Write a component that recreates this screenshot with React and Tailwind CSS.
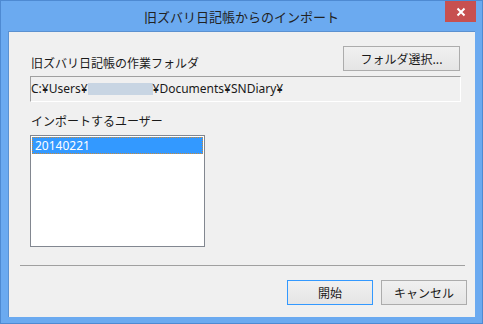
// App.jsx - 旧ズバリ日記帳からのインポート dialog
const font = { fontFamily: '"Noto Sans CJK JP", "Noto Sans", sans-serif' };
const latin = { fontFamily: '"Noto Sans", "Noto Sans CJK JP", sans-serif' };

const Button = ({ children, primary, className = "" }) => (
  <button
    className={`flex items-center justify-center h-[25px] text-[12px] text-[#1a1a1a] bg-gradient-to-b from-[#f0f0f0] to-[#e5e5e5] border ${
      primary ? "border-[#3399ff]" : "border-[#acacac]"
    } ${className}`}
  >
    {children}
  </button>
);

const App = () => {
  return (
    <div
      className="w-[483px] h-[324px] bg-[#6baaf0] border border-[#4e8ad2] flex flex-col overflow-hidden"
      style={font}
    >
      {/* title bar */}
      <div className="h-[30px] flex items-center relative shrink-0">
        <div className="flex-1 text-center text-[13px] text-[#222] leading-[30px] pt-[2px]">
          旧ズバリ日記帳からのインポート
        </div>
        <div className="absolute right-[6px] top-0 w-[31px] h-[21px] bg-[#c75050] flex items-center justify-center">
          <svg width="10" height="10" viewBox="0 0 10 10">
            <path d="M1.5 1.5 L8.5 8.5 M8.5 1.5 L1.5 8.5" stroke="#fff" strokeWidth="2" />
          </svg>
        </div>
      </div>

      {/* client area */}
      <div className="mx-[7px] w-[467px] h-[286px] bg-[#f0f0f0] border border-[#5b91d0] border-r-0 border-b-0 pl-[21px] flex flex-col">
        <div className="mt-[14px] flex items-end justify-between h-[25px]">
          <span className="text-[12px] leading-[16px] text-[#1a1a1a] pl-[1px]">旧ズバリ日記帳の作業フォルダ</span>
          <Button className="w-[117px] mr-[15px]">フォルダ選択...</Button>
        </div>

        <div
          className="mt-[5px] w-[431px] h-[26px] border border-[#a0a0a0] border-r-white border-b-white flex items-center text-[12px] text-[#1a1a1a]"
          style={latin}
        >
          <span>C:¥Users¥</span>
          <span className="w-[65px] h-[12px] bg-[#c8d5e3]" />
          <span>¥Documents¥SNDiary¥</span>
        </div>

        <div className="mt-[11px] text-[12px] leading-[16px] text-[#1a1a1a] pl-[1px]">インポートするユーザー</div>

        <div className="mt-[6px] w-[175px] h-[112px] bg-white border border-[#828790] p-[1px]">
          <div
            className="h-[17px] bg-[#3399ff] border border-dotted border-[#c98a3a] text-white text-[12px] leading-[15px] pl-[2px]"
            style={latin}
          >
            20140221
          </div>
        </div>

        <div className="mt-[18px] -ml-[10px] w-[445px] h-px bg-[#a0a0a0]" />

        <div className="mt-[14px] flex justify-end gap-[8px] pr-[8px]">
          <Button primary className="w-[86px]">開始</Button>
          <Button className="w-[86px]">キャンセル</Button>
        </div>
      </div>
    </div>
  );
};

export default App;
